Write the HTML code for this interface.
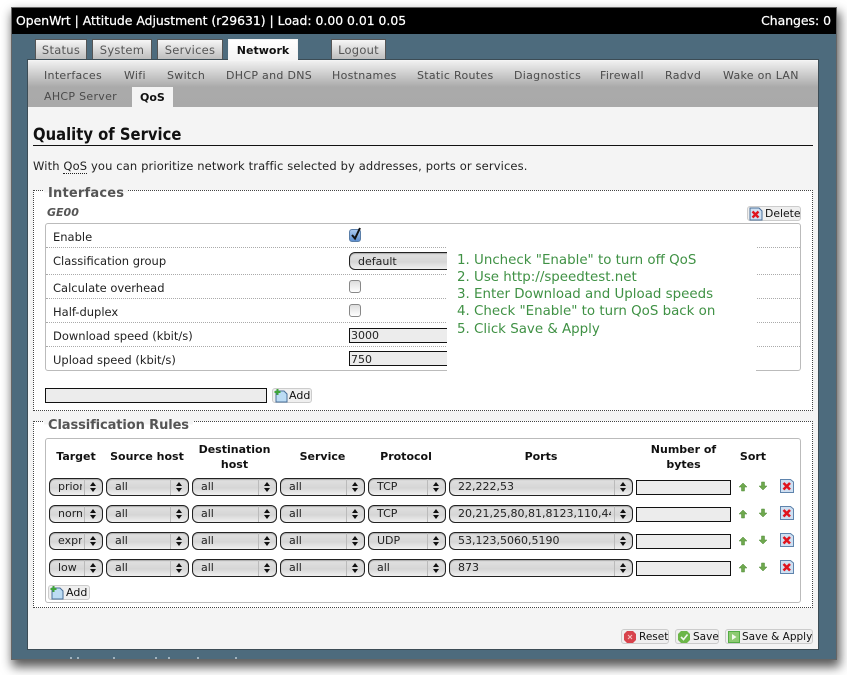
<!DOCTYPE html>
<html><head><meta charset="utf-8"><title>OpenWrt QoS</title>
<style>
html,body{margin:0;padding:0;background:#fff;width:847px;height:675px;overflow:hidden}
body{font-family:"DejaVu Sans","Liberation Sans",sans-serif;font-size:11.5px;color:#222;position:relative}
div,span{position:absolute;box-sizing:border-box}
.t{white-space:nowrap;line-height:14px;height:14px}
.win{left:12px;top:8px;width:824px;height:651px;background:#4d6b7d;box-shadow:0 0 0 1px #666,2px 6px 10px 2px rgba(0,0,0,.65)}
.bar{left:12px;top:8px;width:824px;height:26px;background:#000}
.ttl{color:#fff;font-size:12.4px;-webkit-text-stroke:.25px #fff}
.tab{top:39px;height:21px;background:linear-gradient(#f6f6f6,#bbb);border:1px solid #555;border-bottom:0;text-align:center;line-height:21px;color:#555;font-size:11.5px;letter-spacing:.25px}
.tab.on{background:linear-gradient(#fff,#f4f4f4);color:#111;font-weight:bold;border-color:#f4f4f4;font-size:11px;letter-spacing:0}
.main{left:28px;top:60px;width:790px;height:589px;background:#f4f4f4;box-shadow:0 0 0 1px #3c4c55}
.sub{left:28px;top:61px;width:790px;height:46px;background:linear-gradient(#f0f0f0,#aaa 26px,#a9a9a9)}
.n{color:#4a4a4a;font-size:11px;letter-spacing:.3px}
.fs{background:#fff;border:1px dotted #444}
.box{background:#fff;border:1px solid #bbb;border-radius:3px}
.leg{font-weight:bold;color:#555;font-size:13px;background:linear-gradient(#f4f4f4 40%,#fff 40%);height:16px;line-height:15px;padding:0 4px;white-space:nowrap}
.dl{left:46px;width:754px;height:1px;border-top:1px dotted #aaa}
.l{left:53px;font-size:11.5px;color:#222}
.sel{height:18px;border:1px solid #222;border-radius:6px;background:linear-gradient(#e2e2e2,#d6d6d6 55%,#f0f0f0);overflow:hidden;font-size:11px;line-height:15px;color:#222;box-shadow:inset 0 1px 1px #aaa}
.sel b{position:absolute;left:8px;top:0;font-weight:normal;white-space:nowrap}
.sel i{position:absolute;right:0;top:0;width:17px;height:16px;border-left:1px solid #bbb}
.sel i:before{content:"";position:absolute;left:5px;top:3px;border:3px solid transparent;border-top:0;border-bottom:4px solid #111}
.sel i:after{content:"";position:absolute;left:5px;top:9px;border:3px solid transparent;border-bottom:0;border-top:4px solid #111}
.inp{background:#ececec;border:1px solid #111;font-size:11px;line-height:13px;padding-left:1px;color:#222;white-space:nowrap}
.cb{width:12px;height:13px;border:1px solid #888;border-radius:3px;background:linear-gradient(#ddd,#fff)}
.btn{height:15px;background:#efefef;border:1px solid #ccc;border-radius:3px;font-size:11px;line-height:14px;color:#111;white-space:nowrap}
.btn span{left:17px;top:0;line-height:14px}
.ft{font-size:10.5px}
svg{position:absolute;overflow:visible}
.th{font-weight:bold;font-size:11px;color:#111;text-align:center;line-height:15px}
.sp{width:2px;height:2px;top:657px;background:#9fb3bf}
</style></head><body>
<div class="win"></div>
<div class="bar"></div>
<div class="t ttl" style="left:16px;top:14px">OpenWrt | Attitude Adjustment (r29631) | Load: 0.00 0.01 0.05</div>
<div class="t ttl" style="right:16px;top:14px">Changes: 0</div>

<div class="tab" style="left:35px;width:52px">Status</div>
<div class="tab" style="left:92px;width:60px">System</div>
<div class="tab" style="left:157px;width:66px">Services</div>
<div class="tab" style="left:331px;width:55px">Logout</div>
<div class="main"></div>
<div class="sub"></div>
<div class="tab on" style="left:228px;width:70px">Network</div>

<div class="t n" style="left:44px;top:69px">Interfaces</div>
<div class="t n" style="left:124px;top:69px">Wifi</div>
<div class="t n" style="left:167px;top:69px">Switch</div>
<div class="t n" style="left:226px;top:69px">DHCP and DNS</div>
<div class="t n" style="left:332px;top:69px">Hostnames</div>
<div class="t n" style="left:417px;top:69px">Static Routes</div>
<div class="t n" style="left:514px;top:69px">Diagnostics</div>
<div class="t n" style="left:600px;top:69px">Firewall</div>
<div class="t n" style="left:665px;top:69px">Radvd</div>
<div class="t n" style="left:723px;top:69px">Wake on LAN</div>
<div class="t n" style="left:44px;top:90px">AHCP Server</div>
<div style="left:132px;top:87px;width:41px;height:20px;background:#f4f4f4"></div>
<div class="t" style="left:140px;top:91px;font-size:11px;font-weight:bold;color:#111">QoS</div>

<div class="t" style="left:33px;top:125px;height:20px;line-height:20px;font-size:16.5px;font-weight:bold;color:#111;transform:scaleX(.897);transform-origin:0 0">Quality of Service</div>
<div style="left:33px;top:145px;width:780px;height:1px;background:#111"></div>
<div class="t" style="left:33px;top:159px;font-size:11.5px;letter-spacing:.13px;color:#222">With <span style="position:static;border-bottom:1px dotted #222">QoS</span> you can prioritize network traffic selected by addresses, ports or services.</div>

<!-- Interfaces -->
<div class="fs" style="left:33px;top:190px;width:780px;height:221px"></div>
<div class="leg" style="left:44px;top:186px;letter-spacing:.2px">Interfaces</div>
<div class="t" style="left:47px;top:206px;font-size:11px;font-weight:bold;font-style:italic;color:#555">GE00</div>
<div class="btn" style="left:747px;top:206px;width:54px">
<svg style="left:1px;top:0" width="14" height="14" viewBox="0 0 14 14"><path d="M1 1H10L13 4V13H1Z" fill="#cfe0f2" stroke="#4a6f9a"/><path d="M3.5 4.5L9.5 10.5M9.5 4.5L3.5 10.5" stroke="#e0141e" stroke-width="2.4"/></svg><span style="left:17px;font-size:10.8px">Delete</span></div>
<div class="box" style="left:45px;top:223px;width:756px;height:148px"></div>
<div class="dl" style="top:247px"></div><div class="dl" style="top:274px"></div><div class="dl" style="top:298px"></div><div class="dl" style="top:322px"></div><div class="dl" style="top:346px"></div>
<div class="t l" style="top:230px">Enable</div>
<div class="t l" style="top:254px">Classification group</div>
<div class="t l" style="top:281px">Calculate overhead</div>
<div class="t l" style="top:305px">Half-duplex</div>
<div class="t l" style="top:329px">Download speed (kbit/s)</div>
<div class="t l" style="top:353px">Upload speed (kbit/s)</div>
<div class="cb" style="left:349px;top:229px;background:linear-gradient(#a9c8ee,#5d8fd0);border-color:#5a7ea8"></div>
<svg style="left:349px;top:226px" width="14" height="16" viewBox="0 0 14 16"><path d="M3 9L6 12.5L11 2" fill="none" stroke="#111" stroke-width="2"/></svg>
<div class="sel" style="left:349px;top:252px;width:140px"><b style="top:1px">default</b></div>
<div class="cb" style="left:349px;top:280px"></div>
<div class="cb" style="left:349px;top:304px"></div>
<div class="inp" style="left:349px;top:328px;width:140px;height:15px">3000</div>
<div class="inp" style="left:349px;top:351px;width:140px;height:15px;line-height:15px">750</div>
<div style="left:447px;top:230px;width:309px;height:144px;background:#fff"></div>
<div class="t" style="left:457px;top:252px;font-size:13.4px;line-height:17px;height:90px;color:#3f9144">1. Uncheck "Enable" to turn off QoS<br>2. Use http://speedtest.net<br>3. Enter Download and Upload speeds<br>4. Check "Enable" to turn QoS back on<br><span style="position:static;display:inline-block;margin-top:1px">5. Click Save &amp; Apply</span></div>
<div class="inp" style="left:45px;top:388px;width:222px;height:15px"></div>
<div class="btn" style="left:272px;top:388px;width:40px">
<svg style="left:1px;top:0" width="14" height="14" viewBox="0 0 14 14"><path d="M2 2H10L13 5V13H2Z" fill="#bcdcf4" stroke="#4a6f9a"/><path d="M3.5 0V6M.5 3H6.5" stroke="#3fa53a" stroke-width="2"/></svg><span style="left:16px">Add</span></div>

<!-- Classification -->
<div class="fs" style="left:33px;top:421px;width:780px;height:187px"></div>
<div class="leg" style="left:44px;top:418px;letter-spacing:-.1px">Classification Rules</div>
<div class="box" style="left:45px;top:438px;width:756px;height:165px"></div>
<div class="th" style="left:49px;width:54px;top:449px">Target</div>
<div class="th" style="left:106px;width:82px;top:449px">Source host</div>
<div class="th" style="left:192px;width:85px;top:442px">Destination<br>host</div>
<div class="th" style="left:280px;width:85px;top:449px">Service</div>
<div class="th" style="left:367px;width:78px;top:449px">Protocol</div>
<div class="th" style="left:449px;width:184px;top:449px">Ports</div>
<div class="th" style="left:636px;width:95px;top:442px">Number of<br>bytes</div>
<div class="th" style="left:737px;width:32px;top:449px">Sort</div>

<!-- row 1 -->
<div class="sel" style="left:49px;top:478px;width:54px"><b style="width:24px;overflow:hidden">priority</b><i></i></div>
<div class="sel" style="left:106px;top:478px;width:83px"><b>all</b><i></i></div>
<div class="sel" style="left:192px;top:478px;width:85px"><b>all</b><i></i></div>
<div class="sel" style="left:280px;top:478px;width:85px"><b>all</b><i></i></div>
<div class="sel" style="left:368px;top:478px;width:78px"><b>TCP</b><i></i></div>
<div class="sel" style="left:449px;top:478px;width:184px"><b>22,222,53</b><i></i></div>
<div class="inp" style="left:636px;top:480px;width:95px;height:15px"></div>
<!-- row 2 -->
<div class="sel" style="left:49px;top:505px;width:54px"><b style="width:24px;overflow:hidden">normal</b><i></i></div>
<div class="sel" style="left:106px;top:505px;width:83px"><b>all</b><i></i></div>
<div class="sel" style="left:192px;top:505px;width:85px"><b>all</b><i></i></div>
<div class="sel" style="left:280px;top:505px;width:85px"><b>all</b><i></i></div>
<div class="sel" style="left:368px;top:505px;width:78px"><b>TCP</b><i></i></div>
<div class="sel" style="left:449px;top:505px;width:184px"><b style="width:153px;overflow:hidden">20,21,25,80,81,8123,110,443</b><i></i></div>
<div class="inp" style="left:636px;top:507px;width:95px;height:15px"></div>
<!-- row 3 -->
<div class="sel" style="left:49px;top:532px;width:54px"><b style="width:24px;overflow:hidden">express</b><i></i></div>
<div class="sel" style="left:106px;top:532px;width:83px"><b>all</b><i></i></div>
<div class="sel" style="left:192px;top:532px;width:85px"><b>all</b><i></i></div>
<div class="sel" style="left:280px;top:532px;width:85px"><b>all</b><i></i></div>
<div class="sel" style="left:368px;top:532px;width:78px"><b>UDP</b><i></i></div>
<div class="sel" style="left:449px;top:532px;width:184px"><b>53,123,5060,5190</b><i></i></div>
<div class="inp" style="left:636px;top:534px;width:95px;height:15px"></div>
<!-- row 4 -->
<div class="sel" style="left:49px;top:559px;width:54px"><b>low</b><i></i></div>
<div class="sel" style="left:106px;top:559px;width:83px"><b>all</b><i></i></div>
<div class="sel" style="left:192px;top:559px;width:85px"><b>all</b><i></i></div>
<div class="sel" style="left:280px;top:559px;width:85px"><b>all</b><i></i></div>
<div class="sel" style="left:368px;top:559px;width:78px"><b>all</b><i></i></div>
<div class="sel" style="left:449px;top:559px;width:184px"><b>873</b><i></i></div>
<div class="inp" style="left:636px;top:561px;width:95px;height:15px"></div>

<svg style="left:0;top:0" width="847" height="675" viewBox="0 0 847 675">
<defs>
<g id="u"><path d="M4 0L8 4H5.5V8H2.5V4H0Z" fill="#6fa84e" stroke="#4d8a35" stroke-width=".5"/></g>
<g id="d"><path d="M4 8L8 4H5.5V0H2.5V4H0Z" fill="#6fa84e" stroke="#4d8a35" stroke-width=".5"/></g>
<g id="x"><path d="M.5 .5H10.5L13.5 3V13.5H.5Z" fill="#cfe0f2" stroke="#5f84ad"/><path d="M3.5 4L10 10.5M10 4L3.5 10.5" stroke="#e0141e" stroke-width="2.6"/></g>
</defs>
<use href="#u" x="739" y="483"/><use href="#d" x="759" y="482"/><use href="#x" x="780" y="479"/>
<use href="#u" x="739" y="510"/><use href="#d" x="759" y="509"/><use href="#x" x="780" y="506"/>
<use href="#u" x="739" y="537"/><use href="#d" x="759" y="536"/><use href="#x" x="780" y="533"/>
<use href="#u" x="739" y="564"/><use href="#d" x="759" y="563"/><use href="#x" x="780" y="560"/>
</svg>

<div class="btn" style="left:48px;top:585px;width:42px">
<svg style="left:1px;top:0" width="14" height="14" viewBox="0 0 14 14"><path d="M2 2H10L13 5V13H2Z" fill="#bcdcf4" stroke="#4a6f9a"/><path d="M3.5 0V6M.5 3H6.5" stroke="#3fa53a" stroke-width="2"/></svg><span style="left:17px">Add</span></div>

<!-- Footer -->
<div class="btn ft" style="left:621px;top:629px;width:48px">
<svg style="left:2px;top:1px" width="12" height="12" viewBox="0 0 12 12"><path d="M3 0H9L12 3V9L9 12H3L0 9V3Z" fill="#d8434c"/><path d="M4 4L8 8M8 4L4 8" stroke="#f4c4c4" stroke-width="1"/></svg><span>Reset</span></div>
<div class="btn ft" style="left:675px;top:629px;width:44px">
<svg style="left:2px;top:1px" width="12" height="12" viewBox="0 0 12 12"><path d="M3 0H9L12 3V9L9 12H3L0 9V3Z" fill="#6cb648"/><path d="M3 6L5.5 8.5L9.5 3.5" fill="none" stroke="#f2f8ee" stroke-width="1.6"/></svg><span>Save</span></div>
<div class="btn ft" style="left:725px;top:629px;width:88px">
<svg style="left:2px;top:1px" width="12" height="12" viewBox="0 0 12 12"><rect width="12" height="12" fill="#54ad45"/><rect x="1" y="1" width="10" height="10" fill="#8ecb72"/><path d="M4 3L8.5 6L4 9Z" fill="#f4faee"/></svg><span style="left:16px">Save &amp; Apply</span></div>

<div class="sp" style="left:70px"></div><div class="sp" style="left:77px"></div><div class="sp" style="left:113px"></div><div class="sp" style="left:155px"></div><div class="sp" style="left:168px"></div><div class="sp" style="left:197px"></div><div class="sp" style="left:235px"></div>
</body></html>
